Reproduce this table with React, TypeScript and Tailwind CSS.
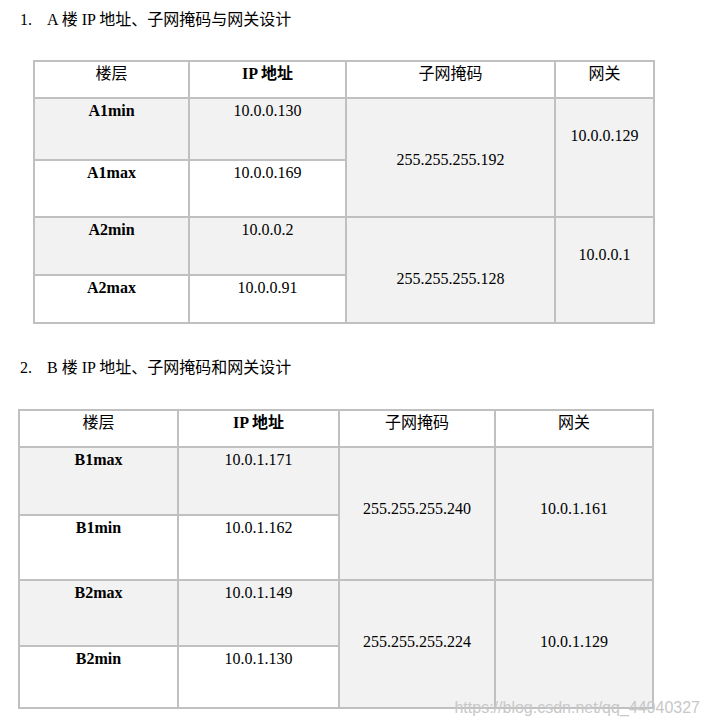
import React from "react";

const serif = { fontFamily: '"Liberation Serif", "Noto Sans CJK SC", serif' };

function Cell({
  children,
  gray,
  bold,
  className = "",
}: {
  children?: React.ReactNode;
  gray?: boolean;
  bold?: boolean;
  className?: string;
}) {
  return (
    <div
      className={`${gray ? "bg-[#f2f2f2]" : "bg-white"} ${bold ? "font-bold" : ""} text-center text-[16px] leading-5 text-black ${className}`}
    >
      {children}
    </div>
  );
}

export default function App() {
  return (
    <div className="relative w-[710px] h-[727px] bg-white text-black" style={serif}>
      <div className="pl-[20px] pt-[10px] text-[16px] leading-5">
        <span className="inline-block w-[27px]">1.</span>A 楼 IP 地址、子网掩码与网关设计
      </div>

      <div className="ml-[33px] mt-[30px] w-fit">
        <div className="grid grid-cols-[153px_155px_207px_97px] grid-rows-[35px_60px_55px_56px_46px] gap-[2px] p-[2px] bg-[#c0c0c0]">
          <Cell className="pt-[2px]">楼层</Cell>
          <Cell bold className="pt-[2px]">IP 地址</Cell>
          <Cell className="pt-[2px]">子网掩码</Cell>
          <Cell className="pt-[2px]">网关</Cell>

          <Cell gray bold className="pt-[2px]">A1min</Cell>
          <Cell gray className="pt-[2px]">10.0.0.130</Cell>
          <Cell gray className="row-span-2 pt-[51px]">255.255.255.192</Cell>
          <Cell gray className="row-span-2 pt-[27px]">10.0.0.129</Cell>

          <Cell bold className="pt-[2px]">A1max</Cell>
          <Cell className="pt-[2px]">10.0.0.169</Cell>

          <Cell gray bold className="pt-[2px]">A2min</Cell>
          <Cell gray className="pt-[2px]">10.0.0.2</Cell>
          <Cell gray className="row-span-2 pt-[51px]">255.255.255.128</Cell>
          <Cell gray className="row-span-2 pt-[27px]">10.0.0.1</Cell>

          <Cell bold className="pt-[2px]">A2max</Cell>
          <Cell className="pt-[2px]">10.0.0.91</Cell>
        </div>
      </div>

      <div className="pl-[20px] mt-[34px] text-[16px] leading-5">
        <span className="inline-block w-[27px]">2.</span>B 楼 IP 地址、子网掩码和网关设计
      </div>

      <div className="ml-[18px] mt-[31px] w-fit">
        <div className="grid grid-cols-[157px_159px_154px_156px] grid-rows-[35px_66px_63px_64px_60px] gap-[2px] p-[2px] bg-[#c0c0c0]">
          <Cell className="pt-[2px]">楼层</Cell>
          <Cell bold className="pt-[2px]">IP 地址</Cell>
          <Cell className="pt-[2px]">子网掩码</Cell>
          <Cell className="pt-[2px]">网关</Cell>

          <Cell gray bold className="pt-[2px]">B1max</Cell>
          <Cell gray className="pt-[2px]">10.0.1.171</Cell>
          <Cell gray className="row-span-2 pt-[51px]">255.255.255.240</Cell>
          <Cell gray className="row-span-2 pt-[51px]">10.0.1.161</Cell>

          <Cell bold className="pt-[2px]">B1min</Cell>
          <Cell className="pt-[2px]">10.0.1.162</Cell>

          <Cell gray bold className="pt-[2px]">B2max</Cell>
          <Cell gray className="pt-[2px]">10.0.1.149</Cell>
          <Cell gray className="row-span-2 pt-[51px]">255.255.255.224</Cell>
          <Cell gray className="row-span-2 pt-[51px]">10.0.1.129</Cell>

          <Cell bold className="pt-[2px]">B2min</Cell>
          <Cell className="pt-[2px]">10.0.1.130</Cell>
        </div>
      </div>

      <div
        className="absolute right-[10px] top-[698px] text-[16px] leading-5 text-[#c8c8c8]"
        style={{ fontFamily: '"Liberation Sans", Arial, sans-serif' }}
      >
        https://blog.csdn.net/qq_44040327
      </div>
    </div>
  );
}
